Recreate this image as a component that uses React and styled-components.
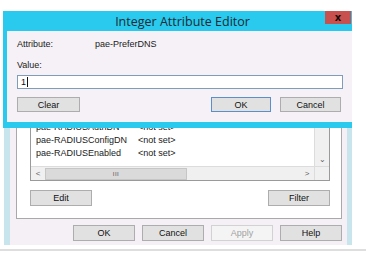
import React from "react";
import styled, { createGlobalStyle } from "styled-components";

const GlobalStyle = createGlobalStyle`
    html, body {
        margin: 0;
        padding: 0;
        background: #fff;
    }
    body {
        font-family: "Liberation Sans", Arial, sans-serif;
    }
`;

const Page = styled.div`
    position: relative;
    width: 366px;
    height: 253px;
    overflow: hidden;
    background: #fff;
    padding-top: 20px;
    box-sizing: border-box;
`;

const BackWindow = styled.div`
    margin-left: 4px;
    width: 348px;
    height: 225px;
    box-sizing: border-box;
    background: #f5f0f5;
    border-left: 6px solid #c8e4ec;
    border-right: 5px solid #c8e4ec;
    padding: 20px 5px 5px 6px;
    display: flex;
    flex-direction: column;
`;

const TabPanel = styled.div`
    flex: 1;
    background: #fff;
    border: 1px solid #a9a9a9;
    padding: 59px 11px 12px 13px;
    display: flex;
    flex-direction: column;
`;

const ListBox = styled.div`
    height: 79px;
    border: 1px solid #9a9a9a;
    display: grid;
    grid-template-columns: 1fr 15px;
    grid-template-rows: 1fr 14px;
`;

const Rows = styled.div`
    display: flex;
    flex-direction: column;
    justify-content: flex-end;
    padding: 0 0 7px 5px;
    overflow: hidden;
`;

const Row = styled.div`
    display: flex;
    flex: none;
    height: 13px;
    align-items: center;
    font-size: 9px;
    color: #1a1a1a;
    white-space: nowrap;
`;

const Name = styled.span`
    width: 102px;
`;

const VScroll = styled.div`
    background: #f0f0f0;
    border-left: 1px solid #dcdcdc;
    display: flex;
    flex-direction: column;
    justify-content: flex-end;
    align-items: center;
`;

const Arrow = styled.div`
    width: 14px;
    height: 14px;
    display: flex;
    align-items: center;
    justify-content: center;
    font-size: 8px;
    color: #606060;
`;

const HScroll = styled.div`
    background: #f0f0f0;
    border-top: 1px solid #dcdcdc;
    display: flex;
    align-items: center;
`;

const Thumb = styled.div`
    width: 142px;
    height: 12px;
    background: #dadada;
    border: 1px solid #c6c6c6;
    box-sizing: border-box;
    display: flex;
    align-items: center;
    justify-content: center;
    font-size: 6px;
    letter-spacing: 0.5px;
    color: #555;
`;

const Track = styled.div`
    flex: 1;
`;

const Corner = styled.div`
    background: #f0f0f0;
    border-top: 1px solid #dcdcdc;
    border-left: 1px solid #dcdcdc;
`;

const ButtonRow = styled.div`
    display: flex;
    align-items: center;
    justify-content: ${props => props.spread ? "space-between" : "flex-end"};
    gap: ${props => props.gap || 0}px;
    margin-top: ${props => props.top || 0}px;
    padding-right: ${props => props.right || 0}px;
`;

const Spacer = styled.div`
    flex: 1;
`;

const Button = styled.div`
    width: ${props => props.w || 62}px;
    height: ${props => props.h || 16}px;
    box-sizing: border-box;
    display: flex;
    align-items: center;
    justify-content: center;
    font-size: 9px;
    background: ${props => props.disabled ? "#f4f4f4" : "#e1e1e1"};
    border: 1px solid ${props => props.disabled ? "#d2d2d2" : props.primary ? "#5b8fc7" : "#adadad"};
    color: ${props => props.disabled ? "#a2a2a2" : "#111"};
`;

const Divider = styled.div`
    margin-top: 4px;
    height: 2px;
    background: #dedede;
`;

const Dialog = styled.div`
    position: absolute;
    top: 11px;
    left: 3px;
    width: 349px;
    height: 117px;
    box-sizing: border-box;
    background: #29caee;
    padding: 0 0 6px 4px;
    display: flex;
    flex-direction: column;
    z-index: 2;
`;

const TitleBar = styled.div`
    position: relative;
    height: 20px;
    display: flex;
    align-items: center;
    justify-content: center;
    font-family: "Open Sans", "Noto Sans", sans-serif;
    font-size: 12.5px;
    color: #1c2a33;
    padding-left: 6px;
`;

const CloseButton = styled.div`
    position: absolute;
    top: 0;
    right: 1px;
    width: 26px;
    height: 13px;
    background: #c8504e;
    display: flex;
    align-items: center;
    justify-content: center;
    font-family: "DejaVu Sans", sans-serif;
    font-weight: bold;
    font-size: 10px;
    line-height: 1;
    color: #1a0a0a;
`;

const DialogBody = styled.div`
    flex: 1;
    background: #f6f1f6;
    padding: 8px 9px 0 10px;
    display: flex;
    flex-direction: column;
`;

const Field = styled.div`
    display: flex;
    align-items: center;
    height: 10px;
    margin-top: ${props => props.top || 0}px;
    font-size: 9px;
    color: #1a1a1a;
`;

const Label = styled.span`
    width: 78px;
`;

const Input = styled.div`
    margin-top: 5px;
    height: 14px;
    box-sizing: border-box;
    background: #fff;
    border: 1px solid #7f9db9;
    display: flex;
    align-items: center;
    padding-left: 3px;
    font-size: 9px;
    color: #111;
`;

const Caret = styled.span`
    display: inline-block;
    width: 1px;
    height: 10px;
    background: #111;
    margin-left: 1px;
`;

export default function App() {
    return <>
        <GlobalStyle />
        <Page>
            <BackWindow>
                <TabPanel>
                    <ListBox>
                        <Rows>
                            <Row><Name>pae-RADIUSAuthDN</Name><span>&lt;not set&gt;</span></Row>
                            <Row><Name>pae-RADIUSConfigDN</Name><span>&lt;not set&gt;</span></Row>
                            <Row><Name>pae-RADIUSEnabled</Name><span>&lt;not set&gt;</span></Row>
                        </Rows>
                        <VScroll><Arrow>&#8964;</Arrow></VScroll>
                        <HScroll>
                            <Arrow>&lt;</Arrow>
                            <Thumb>III</Thumb>
                            <Track />
                            <Arrow>&gt;</Arrow>
                        </HScroll>
                        <Corner />
                    </ListBox>
                    <ButtonRow spread top={9}>
                        <Button>Edit</Button>
                        <Button>Filter</Button>
                    </ButtonRow>
                </TabPanel>
                <ButtonRow gap={7} top={6}>
                    <Button>OK</Button>
                    <Button>Cancel</Button>
                    <Button disabled>Apply</Button>
                    <Button>Help</Button>
                </ButtonRow>
            </BackWindow>
            <Divider />
            <Dialog>
                <TitleBar>
                    Integer Attribute Editor
                    <CloseButton>x</CloseButton>
                </TitleBar>
                <DialogBody>
                    <Field><Label>Attribute:</Label><span>pae-PreferDNS</span></Field>
                    <Field top={11}>Value:</Field>
                    <Input>1<Caret /></Input>
                    <ButtonRow top={8} gap={9} right={2}>
                        <Button w={63} h={15}>Clear</Button>
                        <Spacer />
                        <Button w={60} h={15} primary>OK</Button>
                        <Button w={61} h={15}>Cancel</Button>
                    </ButtonRow>
                </DialogBody>
            </Dialog>
        </Page>
    </>;
}
